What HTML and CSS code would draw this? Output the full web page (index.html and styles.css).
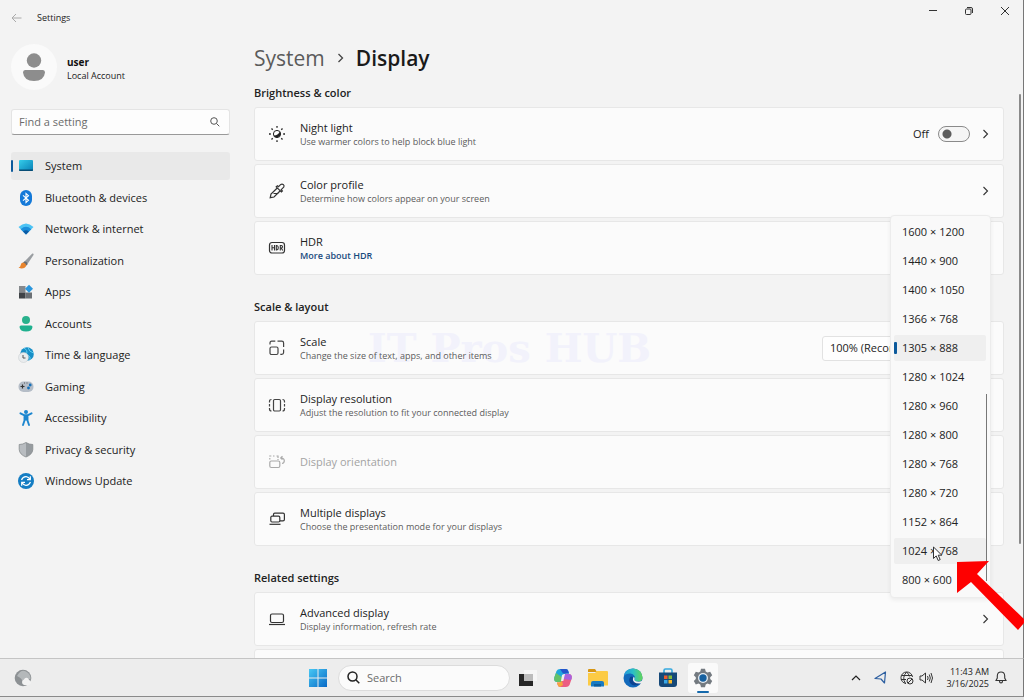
FILE: index.html
```html
<!DOCTYPE html>
<html lang="en">
<head>
<meta charset="utf-8">
<title>Settings</title>
<link rel="stylesheet" href="styles.css">
</head>
<body>
<div class="desktop">
  <div class="window">
    <header class="titlebar">
      <button class="icon-btn back" aria-label="Back"><svg width="11" height="10" viewBox="0 0 11 10"><path d="M10.500 5H1M5 1L1 5l4 4" fill="none" stroke="#aaa"/></svg></button>
      <span class="app-name">Settings</span>
      <div class="caption">
        <button class="icon-btn" aria-label="Minimize"><svg width="10" height="10" viewBox="0 0 10 10"><path d="M1 4.500h8" stroke="#333"/></svg></button>
        <button class="icon-btn" aria-label="Restore"><svg width="10" height="10" viewBox="0 0 10 10" fill="none" stroke="#333"><rect x="1.500" y="3" width="5.500" height="5.500" rx="1"/><path d="M3 1.500h4Q8.500 1.500 8.500 3v4"/></svg></button>
        <button class="icon-btn" aria-label="Close"><svg width="10" height="10" viewBox="0 0 10 10"><path d="M1 1l8 8M9 1L1 9" stroke="#333"/></svg></button>
      </div>
    </header>

    <div class="body">
      <aside class="sidebar">
        <div class="account">
          <svg class="avatar" width="46" height="46" viewBox="0 0 46 46"><circle cx="23" cy="23" r="23" fill="#fafafa"/><circle cx="23" cy="16.500" r="7.200" fill="#8d8d8d"/><path d="M14 26h18q2 0 2 2.500Q33 37 23 37T12 28.500Q12 26 14 26z" fill="#8d8d8d"/></svg>
          <div><strong>user</strong><span>Local Account</span></div>
        </div>
        <label class="find">
          <input type="text" placeholder="Find a setting" aria-label="Find a setting">
          <svg width="10" height="10" viewBox="0 0 10 10" fill="none" stroke="#555"><circle cx="4" cy="4" r="3.300"/><path d="M6.500 6.500L9.300 9.300"/></svg>
        </label>
        <nav class="nav">
          <a href="#" class="current"><svg width="16" height="16" viewBox="0 0 16 16"><defs><linearGradient id="g1" x1="0" y1="0" x2="1" y2="1"><stop stop-color="#35cdea"/><stop offset="1" stop-color="#087fb5"/></linearGradient></defs><rect x="1" y="2" width="14" height="11" rx="1" fill="url(#g1)"/><path d="M1 11.500h14v.5q0 1-1 1H2q-1 0-1-1z" fill="#064c75"/></svg>System</a>
          <a href="#"><svg width="16" height="16" viewBox="0 0 16 16"><rect x="2" y="0" width="12" height="16" rx="6" fill="#1479d8"/><path d="M5 5.300l5.500 5L8 12.500v-9l2.500 2.200L5 10.700" fill="none" stroke="#fff" stroke-width="1.100"/></svg>Bluetooth &amp; devices</a>
          <a href="#"><svg width="16" height="16" viewBox="0 0 16 16"><path d="M.5 6Q8-1 15.500 6L8 13.500z" fill="#4cc3f4"/><path d="M2.700 8.200Q8 3.500 13.300 8.200L8 13.500z" fill="#1a8edb"/><path d="M5 10.400Q8 8 11 10.400L8 13.500z" fill="#0b5ba5"/></svg>Network &amp; internet</a>
          <a href="#"><svg width="16" height="16" viewBox="0 0 16 16"><path d="M14.300.5q1.700-.3 1.200 1.500L9.500 11 6.500 8.500z" fill="#999da1"/><path d="M6.500 8.300q3 .7 3.200 2.900L8 12.800 5 9.800z" fill="#686d72"/><path d="M5 9.500q3 .6 3.300 3-1 3-5 2.900-2 0-2.800-.8 2-.3 2.200-2.500.3-2.400 2.300-2.600z" fill="#e8842d"/></svg>Personalization</a>
          <a href="#"><svg width="16" height="16" viewBox="0 0 16 16"><rect x="1" y="2" width="6.500" height="6.500" fill="#85898d"/><rect x="1" y="8.500" width="6.500" height="6" fill="#3f4347"/><rect x="7.500" y="8.500" width="6.500" height="6" fill="#6b7075"/><path d="M11 .8l4 4-4 4-4-4z" fill="#2996dd"/></svg>Apps</a>
          <a href="#"><svg width="16" height="16" viewBox="0 0 16 16"><circle cx="8" cy="4" r="4" fill="#29b18c"/><path d="M3 9.500h10q1.500 0 1.500 1.500-.5 4.500-6.500 4.500T1.500 11Q1.500 9.500 3 9.500z" fill="#1fb08e"/></svg>Accounts</a>
          <a href="#"><svg width="16" height="16" viewBox="0 0 16 16"><circle cx="9" cy="7" r="6.800" fill="#188fc7"/><path d="M6 1.200Q10 3 8.500 7L12 10v3M10 .500Q11 5 15.500 6" fill="none" stroke="#61cdee"/><circle cx="5.500" cy="10.500" r="5" fill="#e9ecee" stroke="#c5cacd" stroke-width=".5"/><path d="M5 8v3h2.500" fill="none" stroke="#555"/></svg>Time &amp; language</a>
          <a href="#"><svg width="16" height="16" viewBox="0 0 16 16"><rect x=".5" y="2.500" width="15" height="10.500" rx="5" fill="#b5bdc7"/><path d="M2.500 7.500h4M4.500 5.500v4" stroke="#333" stroke-width="1.200"/><path d="M6 4h1M8.500 4h1" stroke="#555"/><circle cx="12.200" cy="6" r="1.400" fill="#1671ba"/><circle cx="10.500" cy="9" r="1.400" fill="#1671ba"/></svg>Gaming</a>
          <a href="#"><svg width="16" height="16" viewBox="0 0 16 16"><circle cx="8" cy="2" r="2" fill="#1c86cf"/><path d="M2.500 3.300L6 5.200h4l3.500-1.900M8 5.500v4M6.500 5.500v5L5 15M9.500 5.500v5L11 15" fill="none" stroke="#1c86cf" stroke-width="1.900" stroke-linecap="round" stroke-linejoin="round"/></svg>Accessibility</a>
          <a href="#"><svg width="16" height="16" viewBox="0 0 16 16"><path d="M8 .5q3 2 6.800 2v5Q14.500 12.500 8 15z" fill="#969b9f"/><path d="M8 .5Q5 2.500 1.200 2.500v5Q1.500 12.500 8 15z" fill="#b8bcc0"/><path d="M8 .5q3 2 6.800 2v5Q14.500 12.500 8 15 1.500 12.500 1.200 7.500v-5Q5 2.500 8 .5z" fill="none" stroke="#858a8d" stroke-width=".8"/></svg>Privacy &amp; security</a>
          <a href="#"><svg width="16" height="16" viewBox="0 0 16 16"><circle cx="8" cy="8" r="8" fill="#147dc3"/><path d="M3.500 7Q5 3.500 8.200 3.700q2.500.2 3.800 2.800M12.300 3.300v3.400H9M12.500 9q-1.500 3.500-4.700 3.300Q5.300 12.100 4 9.500M3.700 12.700V9.300H7" fill="none" stroke="#fff" stroke-width="1.200"/></svg>Windows Update</a>
        </nav>
      </aside>

      <main class="content">
        <h1 class="crumbs"><a href="#">System</a><svg width="7" height="10" viewBox="0 0 7 10"><path d="M1.500 1l4 4-4 4" fill="none" stroke="#444" stroke-width="1.300"/></svg><span>Display</span></h1>

        <section class="group">
          <h2>Brightness &amp; color</h2>
          <div class="card">
            <svg class="glyph" width="18" height="18" viewBox="0 0 18 18"><path d="M9 1v1.800M9 15.200V17M1 9h1.800M15.200 9H17M3.500 3.500l1.200 1.200M13.300 13.300l1.200 1.200M14.500 3.500l-1.200 1.200M4.700 13.300l-1.200 1.200" stroke="#222" stroke-width="1.300"/><circle cx="9" cy="9" r="3.600" fill="#fff" stroke="#222"/><path d="M12 6.500A3.800 3.800 0 1 1 5.500 10.500Q9.500 11 12 6.500z" fill="#222"/></svg>
            <div class="label"><b id="night">Night light</b><small>Use warmer colors to help block blue light</small></div>
            <span class="state">Off</span>
            <input type="checkbox" class="toggle" aria-labelledby="night">
            <button class="icon-btn go" aria-label="Open night light"><svg width="7" height="10" viewBox="0 0 7 10"><path d="M1.500 1l4 4-4 4" fill="none" stroke="#333" stroke-width="1.100"/></svg></button>
          </div>
          <div class="card">
            <svg class="glyph" width="18" height="18" viewBox="0 0 18 18" fill="none" stroke="#333" stroke-width="1.200"><path d="M9 6.200L3 12l-.8 3.700L6 15l6-6M8.200 4.800l5.200 5.200 1-1-1.200-1.300 2.500-2.500q.9-1.300-.3-2.500t-2.600-.3L10.500 4.700 9.400 3.700zM5.500 11.500h5"/></svg>
            <div class="label"><b>Color profile</b><small>Determine how colors appear on your screen</small></div>
            <button class="icon-btn go" aria-label="Open color profile"><svg width="7" height="10" viewBox="0 0 7 10"><path d="M1.500 1l4 4-4 4" fill="none" stroke="#333" stroke-width="1.100"/></svg></button>
          </div>
          <div class="card">
            <svg class="glyph" width="18" height="18" viewBox="0 0 18 18" fill="none" stroke="#333"><rect x="1.500" y="3.500" width="15" height="10.500" rx="2.500" stroke-width="1.200"/><path d="M4 6v5.500M6.500 6v5.500M4 8.700h2.500M8.300 6.500V11h.5q1.500-.2 1.500-2.200T8.800 6.500zM12.300 11.500v-5h1q1.200.1 1.200 1.200T13.300 9h-1M13.300 9l1.400 2.500" stroke-width="1.100"/></svg>
            <div class="label"><b>HDR</b><a href="#">More about HDR</a></div>
          </div>
        </section>

        <section class="group">
          <h2>Scale &amp; layout</h2>
          <div class="card">
            <span class="watermark">IT Pros HUB</span>
            <svg class="glyph" width="18" height="18" viewBox="0 0 18 18" fill="none" stroke="#444" stroke-width="1.200"><rect x="2" y="8" width="8" height="7.500" rx="1.500"/><path d="M2 5.500V4q0-1.800 1.800-1.800h3.500M9.500 2.200h4.300q1.800 0 1.800 1.800v4M15.600 10.500v3q0 1.800-1.800 1.800h-1.500"/></svg>
            <div class="label"><b id="scale">Scale</b><small>Change the size of text, apps, and other items</small></div>
            <select class="combo" aria-labelledby="scale"><option>100% (Recommended)</option></select>
          </div>
          <div class="card">
            <svg class="glyph" width="18" height="18" viewBox="0 0 18 18" fill="none" stroke="#444" stroke-width="1.200"><rect x="5.500" y="3.500" width="7" height="11.500" rx="1.200"/><path d="M3.500 3.500Q1.500 3.500 1.500 5.500v1M1.500 8v2.500M1.500 12v1q0 2 2 2M14.500 3.500q2 0 2 2v1M16.500 8v2.500M16.500 12v1q0 2-2 2"/></svg>
            <div class="label"><b>Display resolution</b><small>Adjust the resolution to fit your connected display</small></div>
            <div class="popup" role="listbox" aria-label="Display resolution">
              <button role="option">1600 × 1200</button>
              <button role="option">1440 × 900</button>
              <button role="option">1400 × 1050</button>
              <button role="option">1366 × 768</button>
              <button role="option" class="selected" aria-selected="true">1305 × 888</button>
              <button role="option">1280 × 1024</button>
              <button role="option">1280 × 960</button>
              <button role="option">1280 × 800</button>
              <button role="option">1280 × 768</button>
              <button role="option">1280 × 720</button>
              <button role="option">1152 × 864</button>
              <button role="option" class="hover">1024 × 768</button>
              <button role="option">800 × 600</button>
              <i class="popup-thumb"></i>
              <svg class="pointer" width="12" height="16" viewBox="0 0 12 16"><path d="M1.500 1v11.500l2.700-2.600 2 4.600 2-.9-2-4.400h3.600z" fill="#fff" stroke="#333"/></svg>
            </div>
          </div>
          <div class="card disabled">
            <svg class="glyph" width="18" height="18" viewBox="0 0 18 18" fill="none" stroke="#aaa" stroke-width="1.200"><rect x="1.800" y="8" width="10" height="6.500" rx="1.500"/><path d="M1.800 6.500V5M1.800 3.500V3h1.500M5 3h1.500M8.500 3H10v2M10 6v1M12.500 5l2-1.800M12.500 5l2 1.500M12.500 5h1.500q2.300.5 2.300 2.800T14 10.500"/></svg>
            <div class="label"><b>Display orientation</b></div>
          </div>
          <div class="card">
            <svg class="glyph" width="18" height="18" viewBox="0 0 18 18" fill="none" stroke="#333" stroke-width="1.200"><path d="M5.500 6V4.500q0-1.300 1.300-1.300h8.200q1.400 0 1.400 1.300v5q0 1.400-1.400 1.400h-3"/><rect x="2.800" y="6.200" width="9" height="5.800" rx="1.200"/><path d="M1.500 14.300h11"/></svg>
            <div class="label"><b>Multiple displays</b><small>Choose the presentation mode for your displays</small></div>
          </div>
        </section>

        <section class="group">
          <h2>Related settings</h2>
          <div class="card">
            <svg class="glyph" width="18" height="18" viewBox="0 0 18 18" fill="none" stroke="#333" stroke-width="1.200"><rect x="2.500" y="4" width="13" height="8.500" rx="1.500"/><path d="M1 14.500h16"/></svg>
            <div class="label"><b>Advanced display</b><small>Display information, refresh rate</small></div>
            <button class="icon-btn go" aria-label="Open advanced display"><svg width="7" height="10" viewBox="0 0 7 10"><path d="M1.500 1l4 4-4 4" fill="none" stroke="#333" stroke-width="1.100"/></svg></button>
          </div>
          <div class="card"></div>
        </section>
      </main>
      <div class="track"></div>
    </div>
  </div>

  <footer class="taskbar">
    <div class="left"><svg width="18" height="18" viewBox="0 0 18 18"><circle cx="9" cy="9" r="8.300" fill="#8d9194"/><path d="M3 7q4-7 9-4.500 5 2.500 4.500 8Q13 9 12.500 13l-3 1Q8 9 3 7z" fill="#b4b8ba"/><path d="M8 13q0-2 2-2.500 1-2.500 3.500-1.500 1.500.8 1.500 2 2 .5 2 2.300T15 16h-5q-2-.5-2-3z" fill="#f2f2f2"/></svg></div>
    <div class="apps">
      <button class="icon-btn" aria-label="Start"><svg width="20" height="20" viewBox="0 0 20 20"><defs><linearGradient id="g2" x2="1" y2="1"><stop stop-color="#48c8f4"/><stop offset="1" stop-color="#0869c6"/></linearGradient></defs><path d="M1 1h8.500v8.500H1zM10.500 1H19v8.500h-8.500zM1 10.500h8.500V19H1zM10.500 10.500H19V19h-8.500z" fill="url(#g2)"/></svg></button>
      <label class="search">
        <svg width="13" height="13" viewBox="0 0 13 13" fill="none" stroke="#222" stroke-width="1.500"><circle cx="5.500" cy="5.500" r="4.500"/><path d="M8.800 8.800l3.500 3.500"/></svg>
        <input type="text" placeholder="Search" aria-label="Search">
      </label>
      <div class="pins">
        <button class="icon-btn" aria-label="Task view"><svg width="20" height="20" viewBox="0 0 20 20"><path d="M1 6h14v12H1z" fill="#262626"/><path d="M6 2h13v11H6z" fill="#f6f6f6"/><path d="M6 6h9v7H6z" fill="#bcbcbc"/></svg></button>
        <button class="icon-btn" aria-label="Copilot"><svg width="20" height="20" viewBox="0 0 20 20"><path d="M7 1h6q1.700 0 2.300 2l.7 2.500h-2.500q-1.800 0-2.400 2L9 14H4.500Q.5 14 1.300 9.500L3.500 3Q4.500 1 7 1z" fill="#20a7dc"/><path d="M3 5L1.300 9.500Q.5 14 4.500 14H9l1-4z" fill="#64c268"/><path d="M7 1h6q1.700 0 2.300 2l.7 2.500H10z" fill="#2455cb"/><path d="M13 19H7q-1.700 0-2.300-2L4 14.500h2.500q1.800 0 2.400-2L11 6h4.500q4 0 3.200 4.500L16.500 17q-1 2-3.500 2z" fill="#ec5d83"/><path d="M11 6h4.500q4 0 3.200 4.500L18 12l-8.500-1z" fill="#a962dd"/><path d="M4 14.500h2.500q1.800 0 2.400-2L10 17l-3 2q-1.700 0-2.300-2z" fill="#f7a53e"/><path d="M9 7l2-1h1l-1.700 7H8z" fill="#efefef"/></svg></button>
        <button class="icon-btn" aria-label="File Explorer"><svg width="20" height="20" viewBox="0 0 20 20"><path d="M0 2q0-1 1-1h6l2 3H0z" fill="#d79613"/><path d="M0 5h7l2-2h10q1 0 1 1v13.500H0z" fill="#fccb45"/><path d="M3 18.500V15q0-2 2-2h9q2 0 2 2v3.500z" fill="#187bc3"/><path d="M6 16h7v2.500H6z" fill="#0e5e9c"/></svg></button>
        <button class="icon-btn" aria-label="Edge"><svg width="20" height="20" viewBox="0 0 20 20"><defs><linearGradient id="g3" x2="1"><stop stop-color="#2294dc"/><stop offset=".5" stop-color="#2bbfc6"/><stop offset="1" stop-color="#62d557"/></linearGradient></defs><circle cx="10" cy="10" r="9.500" fill="#1269bb"/><path d="M.6 8.500Q2 .5 10.200.5q8.500.5 9.300 8.500.2 4.500-4.500 4.500-4 0-3.500-2.500.8-1 .2-2.700Q10 5 6.500 5.500.6 6.500.6 8.500z" fill="url(#g3)"/><path d="M7 9.500Q5 13 8 16t9.500-.5Q19 14 18 14q-5 1.500-7.500-1-1.500-2-.3-4Q8 8 7 9.500z" fill="#0c4391"/><path d="M11.400 11q-.4 2.700 4.600 2.700 2 0 4-1.700l-1 3.500q-6 .5-8-1.500-1.800-2.500-.6-5 2 .3 1 2z" fill="#ededed"/></svg></button>
        <button class="icon-btn" aria-label="Microsoft Store"><svg width="20" height="20" viewBox="0 0 20 20"><path d="M6 5V2.500Q6 1 7.500 1h5Q14 1 14 2.500V5" fill="none" stroke="#35a9df" stroke-width="1.600"/><path d="M1 4.500h18V16q0 3-3 3H4q-3 0-3-3z" fill="#164979"/><path d="M6 7.500h3.500V11H6z" fill="#ee5b2c"/><path d="M10.500 7.500H14V11h-3.500z" fill="#85bc38"/><path d="M6 12h3.500v3.500H6z" fill="#39a8e7"/><path d="M10.500 12H14v3.500h-3.500z" fill="#fcbb28"/></svg></button>
        <button class="icon-btn active" aria-label="Settings"><svg width="20" height="20" viewBox="0 0 20 20"><path d="M8 .8h4l.7 2.700 1.700 1 2.800-.8 2 3.500-2 2v1.700l2 2-2 3.500-2.800-.8-1.700 1-.7 2.700H8l-.7-2.700-1.700-1-2.800.8-2-3.500 2-2V9.200l-2-2 2-3.500 2.800.8 1.700-1z" fill="#747a80"/><circle cx="10" cy="10" r="5" fill="#e8eef3"/><circle cx="10" cy="10" r="3.700" fill="#17609f"/></svg></button>
      </div>
    </div>
    <div class="tray">
      <button class="icon-btn" aria-label="Show hidden icons"><svg width="10" height="10" viewBox="0 0 10 10"><path d="M1 7l4-4 4 4" fill="none" stroke="#222" stroke-width="1.200"/></svg></button>
      <button class="icon-btn" aria-label="Location"><svg width="13" height="13" viewBox="0 0 13 13"><path d="M1 7.500L11.500 1l-1 11L7 8z" fill="none" stroke="#2d5fa0" stroke-width="1.200" stroke-linejoin="round"/></svg></button>
      <button class="icon-btn net" aria-label="Network and volume">
        <svg width="14" height="14" viewBox="0 0 14 14" fill="none" stroke="#333"><path d="M6 12.500A5.800 5.800 0 1 1 12.500 6M6.500 1q-5 5.500-1 11.500M6.500 1q2.500 2 2.800 4.500M1.500 4.500h10.500M1 8.500h5"/><circle cx="10" cy="10" r="3"/><path d="M8 12l4-4"/></svg>
        <svg width="14" height="14" viewBox="0 0 14 14" fill="none" stroke="#333"><path d="M1 5v4h2l3.500 3V2L3 5zM8.500 5q1.300 2 0 4M10.300 3.500q2 3.500 0 7M12 2q3 5 0 10"/></svg>
      </button>
      <div class="clock"><time>11:43 AM</time><time>3/16/2025</time></div>
      <button class="icon-btn" aria-label="Notifications"><svg width="12" height="13" viewBox="0 0 12 13" fill="none" stroke="#333" stroke-width="1.100"><path d="M1 9.500L2.300 7V4.800Q2.500 1 6 1t3.700 3.800V7L11 9.500zM4.500 10q0 2 1.500 2t1.500-2"/></svg></button>
    </div>
  </footer>
  <svg class="callout" width="67" height="70" viewBox="0 0 67 70"><path d="M0 1l32-1-12 13 47 45v4l-6 7-47-48L0 32z" fill="#fe0000"/></svg>
</div>
</body>
</html>
```
FILE: styles.css
```css
* { box-sizing: border-box; }
body {
  margin: 0;
  font: 11px/14px "Open Sans", "Noto Sans", sans-serif;
  color: #222;
  background: #e6e6e6;
}
button, input, select { font: inherit; color: inherit; }
a { color: inherit; text-decoration: none; }
svg { flex: none; display: block; }
.icon-btn { border: 0; padding: 0; background: none; display: flex; align-items: center; justify-content: center; }

.desktop {
  position: relative;
  display: flex;
  flex-direction: column;
  height: 100vh;
  padding-bottom: 3px;
  overflow: hidden;
}
.window {
  flex: 1;
  min-height: 0;
  display: flex;
  flex-direction: column;
  background: #f3f3f3;
  border-right: 1px solid #777;
}

.titlebar { display: flex; align-items: center; height: 36px; padding-left: 11px; flex: none; }
.app-name { margin-left: 15px; font-size: 9px; }
.caption { display: flex; align-self: flex-start; margin-left: auto; }
.caption .icon-btn { width: 36px; height: 22px; }

.body { flex: 1; min-height: 0; display: flex; padding: 0 2px 0 11px; }
.sidebar { width: 219px; flex: none; margin-right: 24px; }
.account { display: flex; align-items: center; gap: 10px; padding-top: 8px; }
.account div { padding-top: 3px; }
.account strong, .account span { display: block; font-size: 9px; }
.account strong { font-size: 10px; color: #111; }
.find {
  display: flex;
  align-items: center;
  height: 26px;
  margin: 19px 0 17px;
  padding: 0 9px 0 7px;
  background: #fdfdfd;
  border: 1px solid #e4e4e4;
  border-bottom-color: #999;
  border-radius: 3px;
}
.find input { flex: 1; min-width: 0; border: 0; padding: 0; outline: 0; background: none; }
input::placeholder { color: #6b6b6b; opacity: 1; }
.nav { display: flex; flex-direction: column; justify-content: space-between; min-height: 343px; }
.nav a {
  display: flex;
  align-items: center;
  gap: 11px;
  height: 28px;
  padding-left: 7px;
  border-radius: 3px;
}
.nav .current { position: relative; background: #e9e9e9; }
.nav .current::before {
  content: "";
  position: absolute;
  left: 0;
  width: 2px;
  height: 12px;
  border-radius: 1px;
  background: #0c5a9c;
}

.content { flex: 1; min-width: 0; overflow: hidden; }
.crumbs {
  display: flex;
  align-items: center;
  gap: 12px;
  margin: 6px 0 0;
  font-size: 21px;
  line-height: 32px;
  font-weight: 600;
  color: #1a1a1a;
}
.crumbs a { font-weight: 500; color: #5b5b5b; }
.group { display: flex; flex-direction: column; gap: 3px; margin-bottom: 25px; }
.crumbs + .group { padding-top: 12px; }
.group h2 { margin: 0 0 4px; font-size: 11px; line-height: 14px; font-weight: 600; }
.card {
  position: relative;
  display: flex;
  align-items: center;
  height: 54px;
  padding: 0 14px 0 13px;
  background: #fbfbfb;
  border: 1px solid #e7e7e7;
  border-radius: 3px;
}
.glyph { margin-right: 14px; }
.label { position: relative; flex: 1; padding-top: 2px; }
.label b, .label small, .label a { display: block; }
.label b { font-weight: 400; font-size: 11px; }
.label small { font-size: 9px; color: #5c5c5c; }
.label a { font-size: 9px; font-weight: 600; color: #184a7d; }
.disabled .label { padding-top: 0; }
.disabled .label b { color: #a3a3a3; }
.toggle {
  appearance: none;
  width: 32px;
  height: 16px;
  margin: 0 12px 0 9px;
  border: 1px solid #8a8a8a;
  border-radius: 8px;
  background: radial-gradient(circle at 8px 7px, #5c5c5c 4px, #f5f5f5 5px);
}
.combo {
  appearance: none;
  width: 167px;
  height: 25px;
  padding: 0 7px;
  border: 1px solid #e2e2e2;
  border-radius: 3px;
  background: #fefefe;
}
.watermark {
  position: absolute;
  left: 113px;
  font: bold 40px/30px "DejaVu Serif", serif;
  color: #f2f2fb;
  white-space: nowrap;
}
.track { width: 2px; height: 450px; margin: 58px 0 0 15px; border-radius: 1px; background: #8a8a8a; }

.popup {
  position: absolute;
  z-index: 1;
  right: 12px;
  top: -164px;
  width: 101px;
  display: flex;
  flex-direction: column;
  gap: 3px;
  padding: 3px 4px 4px 3px;
  background: #f9f9f9;
  border: 1px solid #ececec;
  border-radius: 4px;
  box-shadow: 0 2px 4px #00000010;
}
.popup button { height: 26px; padding: 0 8px; border: 0; border-radius: 2px; background: none; text-align: left; }
.popup .selected, .popup .hover { background: #efefef; }
.popup .selected { position: relative; }
.popup .selected::before {
  content: "";
  position: absolute;
  left: 0;
  top: 7px;
  width: 3px;
  height: 12px;
  border-radius: 1px;
  background: #0c5a9c;
}
.popup-thumb { position: absolute; right: 3px; top: 178px; bottom: 16px; width: 1px; background: #777; }
.pointer { position: absolute; left: 41px; top: 330px; }

.taskbar {
  flex: none;
  display: grid;
  grid-template-columns: 1fr auto 1fr;
  align-items: center;
  height: 39px;
  padding: 0 16px 0 14px;
  background: #ededed;
  border-top: 1px solid #c4c4c4;
  border-right: 1px solid #777;
  border-bottom: 1px solid #8a8a8a;
}
.apps { display: flex; align-items: center; padding-left: 5px; }
.search {
  display: flex;
  align-items: center;
  gap: 7px;
  width: 172px;
  height: 26px;
  margin: 0 3px 0 10px;
  padding: 0 8px;
  border: 1px solid #dcdcdc;
  border-radius: 13px;
  background: #fbfbfb;
}
.search input { width: 100%; min-width: 0; border: 0; padding: 0; outline: 0; background: none; }
.pins { display: flex; gap: 5px; }
.pins .icon-btn { width: 30px; height: 30px; }
.pins .active { position: relative; background: #fafafa; border-radius: 3px; }
.pins .active::after {
  content: "";
  position: absolute;
  bottom: 0;
  width: 12px;
  height: 2px;
  border-radius: 1px;
  background: #1469ac;
}
.tray { display: flex; align-items: center; justify-content: flex-end; gap: 13px; }
.net { gap: 5px; }
.clock { font-size: 9px; line-height: 12px; text-align: right; }
.clock time { display: block; }
.clock + .icon-btn { margin-left: -7px; }
.callout { position: absolute; z-index: 2; right: 0; top: 561px; }
```
